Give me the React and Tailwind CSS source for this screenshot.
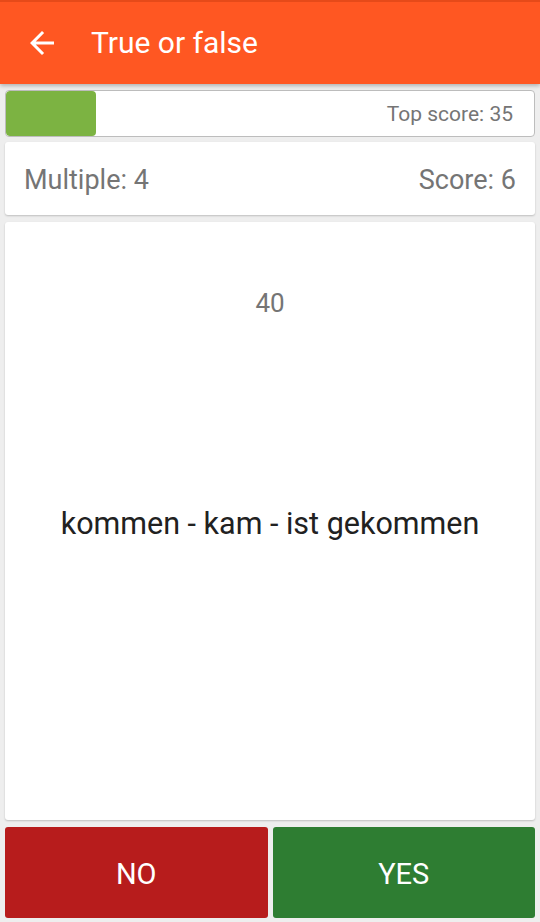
import React from 'react';

const ArrowBack = () => (
  <svg className="w-9 h-9" viewBox="0 0 24 24" fill="#ffffff">
    <path d="M20 11H7.83l5.59-5.59L12 4l-8 8 8 8 1.41-1.41L7.83 13H20v-2z" />
  </svg>
);

const App = () => {
  const best = 35;
  const score = 6;
  const pct = (90 / 530) * 100;

  return (
    <div
      className="w-[540px] h-[922px] flex flex-col bg-[#eeeeee] overflow-hidden"
      style={{ fontFamily: 'Roboto, "Liberation Sans", sans-serif' }}
    >
      {/* toolbar */}
      <div className="h-[84px] shrink-0 flex items-center bg-[#ff5722] border-t-2 border-[#e64a19] shadow-[0_2px_4px_rgba(0,0,0,0.25)] z-10">
        <div className="ml-[24px] w-9 h-9 flex items-center justify-center">
          <ArrowBack />
        </div>
        <span className="ml-[31px] text-white text-[30px] leading-none">True or false</span>
      </div>

      <div className="flex-1 flex flex-col px-[5px] pt-[6px] pb-[4px]">
        {/* progress */}
        <div className="relative h-[47px] shrink-0 bg-white border border-[#bdbdbd] rounded-[4px] overflow-hidden flex items-center justify-end">
          <div
            className="absolute left-0 top-0 bottom-0 bg-[#7cb342] rounded-[4px]"
            style={{ width: `${pct}%` }}
          />
          <span className="relative mr-[21px] pt-[2px] text-[21px] text-[#757575]">Top score: {best}</span>
        </div>

        {/* score row */}
        <div className="mt-[5px] h-[73px] shrink-0 bg-white rounded-[3px] shadow-[0_1px_2px_rgba(0,0,0,0.2)] flex items-center justify-between px-[19px] pt-[3px]">
          <span className="text-[27px] text-[#757575]">Multiple: 4</span>
          <span className="text-[27px] text-[#757575]">Score: {score}</span>
        </div>

        {/* question card */}
        <div className="mt-[7px] flex-1 bg-white rounded-[3px] shadow-[0_1px_2px_rgba(0,0,0,0.2)] flex flex-col items-center">
          <div className="mt-[63px] h-[36px] flex items-center text-[26px] text-[#757575]">40</div>
          <div className="flex-1 flex items-center justify-center pt-[4px]">
            <span className="text-[30.5px] text-[#212121]">kommen - kam - ist gekommen</span>
          </div>
          <div className="h-[98px]" />
        </div>

        {/* answers */}
        <div className="mt-[7px] h-[91px] shrink-0 flex gap-[5px]">
          <button className="flex-1 bg-[#b71c1c] rounded-[3px] text-white text-[29px] pt-[4px]">NO</button>
          <button className="flex-1 bg-[#2e7d32] rounded-[3px] text-white text-[29px] pt-[4px]">YES</button>
        </div>
      </div>
    </div>
  );
};

export default App;
